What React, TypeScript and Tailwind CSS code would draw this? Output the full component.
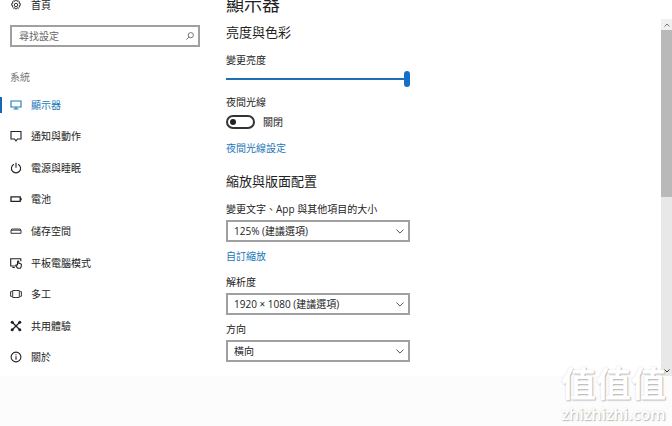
import { useState } from 'react';
import type { ReactNode } from 'react';
import clsx from 'clsx';

interface NavEntry {
  id: string;
  label: string;
  icon: ReactNode;
}

const Icon = ({ children }: { children: ReactNode }) => (
  <svg
    viewBox="0 0 12 12"
    className="size-3 shrink-0"
    fill="none"
    stroke="currentColor"
    strokeWidth="1.1"
    aria-hidden="true"
  >
    {children}
  </svg>
);

const navEntries: NavEntry[] = [
  {
    id: 'display',
    label: '顯示器',
    icon: <path d="M1 2h10v6H1zM6 8v2M3.500 10h5" />,
  },
  {
    id: 'notifications',
    label: '通知與動作',
    icon: <path d="M1 1.500h10v7.500H7.500L6 10.800 4.500 9H1z" />,
  },
  {
    id: 'power',
    label: '電源與睡眠',
    icon: <path d="M6 .8v5M3.900 2.200a4.600 4.600 0 1 0 4.200 0" />,
  },
  {
    id: 'battery',
    label: '電池',
    icon: <path d="M1 3.800h9.200v4.600H1zM11 5v2.200" strokeWidth="1.300" />,
  },
  {
    id: 'storage',
    label: '儲存空間',
    icon: <path d="M1 5.200 1.800 4h8.400l.8 1.200V8.300H1zM1 5.200h10" strokeWidth="0.9" />,
  },
  {
    id: 'tablet',
    label: '平板電腦模式',
    icon: (
      <>
        <path d="M4.800 9H.7V1.800h10.100v2.400M2.300 10.500h2.500" />
        <path d="M7.500 7.800V4.700c0-.9 1.300-.9 1.300 0v1.700l1.800.4q.9.300.8 1.200l-.3 1.700-.8 1.500H7.700L5.800 8.900c-.4-.8.500-1.400 1.100-.8z" />
      </>
    ),
  },
  {
    id: 'multitasking',
    label: '多工',
    icon: <path d="M2.700 2.500h6.600v7H2.700zM2 3.700H.6v4.600H2M10 3.700h1.400v4.600H10" strokeWidth="0.9" />,
  },
  {
    id: 'shared',
    label: '共用體驗',
    icon: (
      <>
        <path d="m2 2 8 8M10 2l-8 8" strokeWidth="1.300" />
        <g fill="currentColor" stroke="none">
          <circle cx="2.200" cy="2.200" r="1.500" />
          <circle cx="9.800" cy="2.200" r="1.500" />
          <circle cx="2.200" cy="9.800" r="1.500" />
          <circle cx="9.800" cy="9.800" r="1.500" />
        </g>
      </>
    ),
  },
  {
    id: 'about',
    label: '關於',
    icon: (
      <>
        <circle cx="6" cy="6" r="4.900" />
        <path d="M6 5.200v3.500M6 3.200v1.100" />
      </>
    ),
  },
];

interface SelectFieldProps {
  id: string;
  label: string;
  options: string[];
}

const SelectField = ({ id, label, options }: SelectFieldProps) => (
  <div className="flex flex-col gap-[3px]">
    <label htmlFor={id}>{label}</label>
    <div className="relative">
      <select
        id={id}
        className="block h-[22px] w-full appearance-none border-2 border-[#a0a0a0] bg-white pr-6 pl-[6px] leading-4"
      >
        {options.map((option) => (
          <option key={option}>{option}</option>
        ))}
      </select>
      <svg
        viewBox="0 0 8 5"
        className="pointer-events-none absolute top-[9px] right-[6px] h-[5px] w-2"
        fill="none"
        stroke="#555"
        aria-hidden="true"
      >
        <path d="m.4.500 3.600 3.600L7.600.500" />
      </svg>
    </div>
  </div>
);

const Sidebar = () => {
  const [active, setActive] = useState('display');

  return (
    <aside className="flex w-[200px] shrink-0 flex-col">
      <a href="#home" className="-mt-[3px] flex h-4 items-center gap-[9px] pl-[10px]">
        <Icon>
          <g strokeWidth="0.9">
            <circle cx="6" cy="6" r="1.700" />
            <path d="m5.200 1.100h1.600l.4 1.300 1.200-.6 1.200 1.200-.6 1.200 1.300.4v1.800l-1.300.4.600 1.200-1.200 1.200-1.200-.6-.4 1.300H5.200l-.4-1.300-1.200.6L2.400 8l.6-1.200-1.300-.4V4.600L3 4.200 2.400 3l1.200-1.200 1.200.6z" />
          </g>
        </Icon>
        首頁
      </a>
      <div className="relative mt-3 ml-[10px]">
        <input
          type="search"
          aria-label="尋找設定"
          placeholder="尋找設定"
          className="block h-[22px] w-full appearance-none border-2 border-[#a0a0a0] bg-white pr-6 pl-[7px] leading-4 placeholder:text-[#666]"
        />
        <svg
          viewBox="0 0 8 8"
          className="pointer-events-none absolute top-[7px] right-[6px] size-2"
          fill="none"
          stroke="#777"
          aria-hidden="true"
        >
          <circle cx="4.800" cy="3.200" r="2.600" />
          <path d="M3 5 .4 7.600" />
        </svg>
      </div>
      <p className="mt-[22px] pl-[10px] text-[#777]">系統</p>
      <nav className="mt-1 grid flex-1 auto-rows-fr pb-[3px]">
        {navEntries.map((entry) => (
          <a
            key={entry.id}
            href={`#${entry.id}`}
            aria-current={active === entry.id ? 'page' : undefined}
            onClick={() => setActive(entry.id)}
            className={clsx('flex items-center', active === entry.id && 'text-[#1a76b9]')}
          >
            <span
              className={clsx('mr-2 h-4 w-[2px]', active === entry.id && 'bg-[#1866b4]')}
            />
            <span className="flex items-center gap-[9px]">
              <Icon>{entry.icon}</Icon>
              {entry.label}
            </span>
          </a>
        ))}
      </nav>
    </aside>
  );
};

const DisplaySettings = () => {
  const [brightness, setBrightness] = useState(100);
  const [nightLight, setNightLight] = useState(false);

  return (
    <main className="-mt-2 ml-[26px] flex w-[184px] flex-col pb-[14px]">
      <h1 className="text-[18px] leading-6">顯示器</h1>

      <h2 className="mt-[6px] text-[13px] leading-5">亮度與色彩</h2>
      <label htmlFor="brightness" className="mt-[10px]">變更亮度</label>
      <input
        id="brightness"
        type="range"
        value={brightness}
        onChange={(event) => setBrightness(Number(event.target.value))}
        className="mt-[3px] block h-4 w-full appearance-none bg-transparent [&::-webkit-slider-runnable-track]:h-[2px] [&::-webkit-slider-runnable-track]:bg-[#1f6fb5] [&::-webkit-slider-thumb]:-mt-[7px] [&::-webkit-slider-thumb]:h-4 [&::-webkit-slider-thumb]:w-[6px] [&::-webkit-slider-thumb]:appearance-none [&::-webkit-slider-thumb]:rounded-[3px] [&::-webkit-slider-thumb]:bg-[#1670c4]"
      />
      <label htmlFor="night-light" className="mt-[7px]">夜間光線</label>
      <div className="mt-1 flex h-4 items-center gap-2">
        <input
          id="night-light"
          type="checkbox"
          role="switch"
          checked={nightLight}
          onChange={(event) => setNightLight(event.target.checked)}
          className="flex h-[14px] w-[29px] appearance-none items-center rounded-full border-2 border-[#333] px-[2px] before:size-[6px] before:rounded-full before:bg-[#222] checked:justify-end"
        />
        <span>{nightLight ? '開啟' : '關閉'}</span>
      </div>
      <a href="#night-light-settings" className="mt-[10px] self-start text-[#1a76b9]">
        夜間光線設定
      </a>

      <h2 className="mt-[15px] mb-[10px] text-[13px] leading-5">縮放與版面配置</h2>
      <SelectField
        id="scale"
        label="變更文字、App 與其他項目的大小"
        options={['125% (建議選項)', '100%', '150%']}
      />
      <a href="#custom-scaling" className="mt-[6px] mb-[10px] self-start text-[#1a76b9]">
        自訂縮放
      </a>
      <div className="flex flex-col gap-[6px]">
        <SelectField
          id="resolution"
          label="解析度"
          options={['1920 × 1080 (建議選項)', '1600 × 900', '1366 × 768']}
        />
        <SelectField id="orientation" label="方向" options={['橫向', '縱向']} />
      </div>
    </main>
  );
};

const ScrollBar = () => (
  <div className="mt-[19px] ml-auto flex w-[11px] flex-col bg-[#e8e8e8]">
    <button type="button" aria-label="向上捲動" className="grid h-[11px] place-items-center bg-[#f0f0f0]">
      <svg viewBox="0 0 6 4" className="h-1 w-[6px]" fill="none" stroke="#777">
        <path d="m.5 3.500 2.500-2.500 2.500 2.500" />
      </svg>
    </button>
    <div className="h-[167px] bg-[#b9b9b9]" />
    <button type="button" aria-label="向下捲動" className="mt-auto grid h-[11px] place-items-center">
      <svg viewBox="0 0 6 4" className="h-1 w-[6px]" fill="none" stroke="#333">
        <path d="m.5.500 2.500 2.500L5.500.500" />
      </svg>
    </button>
  </div>
);

const App = () => (
  <div className="relative min-h-screen overflow-hidden bg-[#fcfcfc] font-['Open_Sans','Noto_Sans_CJK_TC',sans-serif] text-[10px] leading-4 text-[#222]">
    <div className="flex bg-white">
      <Sidebar />
      <DisplaySettings />
      <ScrollBar />
    </div>
    <div className="pointer-events-none absolute right-[6px] bottom-0 text-center text-white [text-shadow:1px_1px_1px_#bbb,0_0_2px_#ddd]">
      <p className="text-[35px] leading-9 font-bold">值值值</p>
      <p className="text-[16px] leading-6 font-semibold">zhizhizhi.com</p>
    </div>
  </div>
);

export default App;
